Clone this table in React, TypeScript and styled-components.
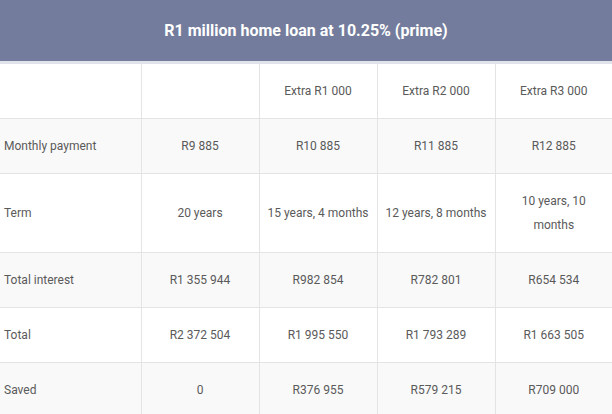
import React from "react";
import styled, { createGlobalStyle } from "styled-components";

const GlobalStyle = createGlobalStyle`
  body {
    margin: 0;
    background: #fff;
    font-family: Roboto, "Liberation Sans", sans-serif;
  }
`;

const Wrap = styled.div`
  width: 612px;
  overflow: hidden;
`;

const Title = styled.h2`
  margin: 0;
  height: 61px;
  display: flex;
  align-items: center;
  justify-content: center;
  background-color: #737c9c;
  border-bottom: 3px solid #e0e3e9;
  color: #fff;
  font-weight: 700;
  font-size: 16px;
`;

const Table = styled.table`
  width: 612px;
  border-collapse: collapse;
  table-layout: fixed;
  font-size: 12px;
  color: #5a5a5a;
`;

const Col = styled.col<{ $w: number }>`
  width: ${(p) => p.$w}px;
`;

const Row = styled.tr`
  &:nth-child(even) {
    background-color: #f9f9f9;
  }
`;

const Cell = styled.td`
  padding: 15px 6px;
  line-height: 24px;
  text-align: center;
  border-right: 1px solid #e4e4e4;
  border-bottom: 1px solid #e4e4e4;
  &:first-child {
    text-align: left;
    padding-left: 4px;
  }
  &:last-child {
    border-right: none;
  }
`;

const widths = [141, 118, 118, 118, 117];

const rows: string[][] = [
  ["", "", "Extra R1 000", "Extra R2 000", "Extra R3 000"],
  ["Monthly payment", "R9 885", "R10 885", "R11 885", "R12 885"],
  ["Term", "20 years", "15 years, 4 months", "12 years, 8 months", "10 years, 10 months"],
  ["Total interest", "R1 355 944", "R982 854", "R782 801", "R654 534"],
  ["Total", "R2 372 504", "R1 995 550", "R1 793 289", "R1 663 505"],
  ["Saved", "0", "R376 955", "R579 215", "R709 000"],
];

export default function App() {
  return (
    <Wrap>
      <GlobalStyle />
      <Title>R1 million home loan at 10.25% (prime)</Title>
      <Table>
        <colgroup>
          {widths.map((w, i) => (
            <Col key={i} $w={w} />
          ))}
        </colgroup>
        <tbody>
          {rows.map((r, i) => (
            <Row key={i}>
              {r.map((c, j) => (
                <Cell key={j}>{c}</Cell>
              ))}
            </Row>
          ))}
        </tbody>
      </Table>
    </Wrap>
  );
}
